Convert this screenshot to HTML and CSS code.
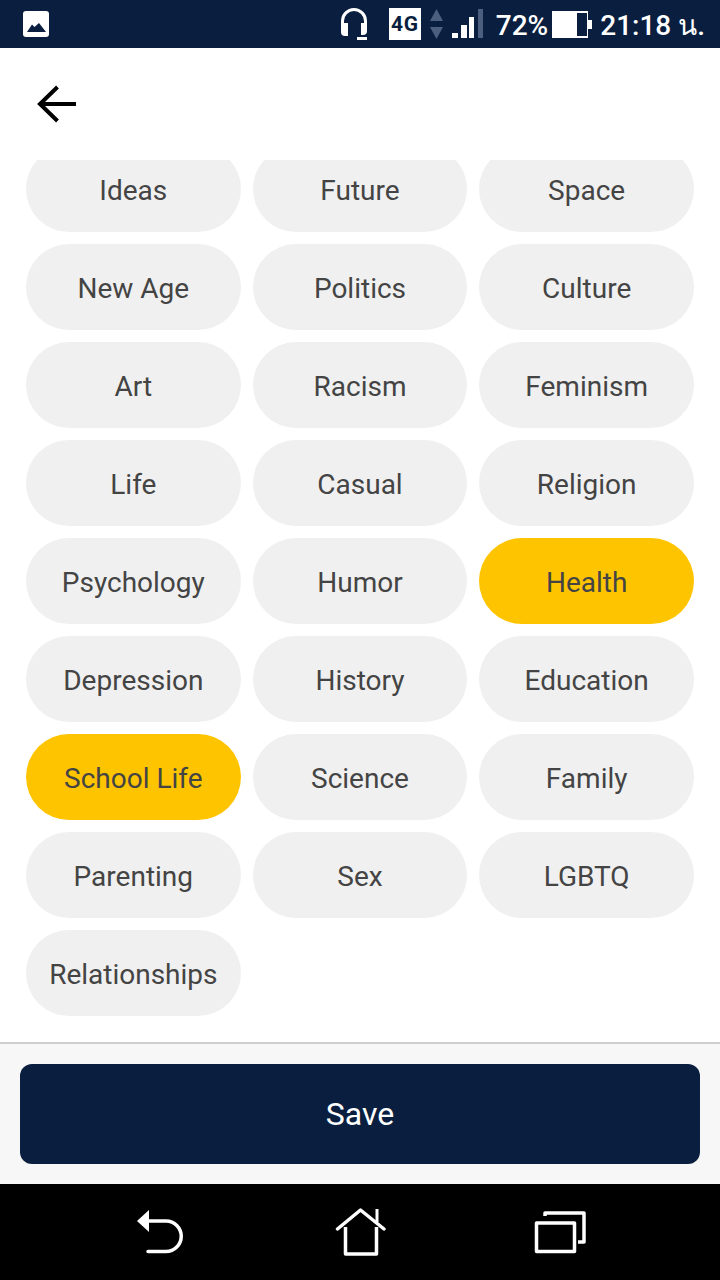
FILE: index.html
```html
<!DOCTYPE html>
<html lang="en">
<head>
  <meta charset="UTF-8">
  <title>Topics</title>
  <link rel="stylesheet" href="styles.css">
</head>
<body>

  <!-- Status bar -->
  <div class="status">
    <svg class="ic-image" width="26" height="26" viewBox="0 0 26 26">
      <rect width="26" height="26" rx="3" fill="#fff"/>
      <path d="M4 21 L9 13.500 L11.500 16 L16 12 L23 21 Z" fill="#0a1f3f"/>
    </svg>
    <div class="status-right">
      <svg class="ic-head" width="26" height="32" viewBox="0 0 26 32">
        <path d="M1.500 20 V13 A11.500 11.500 0 0 1 24.500 13 V20" fill="none" stroke="#fff" stroke-width="3"/>
        <path d="M0 18 Q0 15 3 15 H7 V28 H4 Q0 28 0 24 Z" fill="#fff"/>
        <path d="M26 18 Q26 15 23 15 H20 V27 H22 Q26 27 26 23 Z" fill="#fff"/>
        <rect x="16" y="29" width="10" height="3" fill="#fff"/>
      </svg>
      <div class="net">4G</div>
      <svg class="ic-arrows" width="13" height="30" viewBox="0 0 13 30">
        <path d="M6.500 0 L13 12 H0 Z" fill="#4d5f7e"/>
        <path d="M0 18 H13 L6.500 30 Z" fill="#4d5f7e"/>
      </svg>
      <svg class="ic-signal" width="32" height="30" viewBox="0 0 32 30">
        <rect x="1" y="24" width="6" height="5" fill="#fff"/>
        <rect x="10" y="16" width="6" height="13" fill="#fff"/>
        <rect x="18" y="8" width="5" height="21" fill="#fff"/>
        <rect x="27" y="0" width="5" height="29" fill="#4d5f7e"/>
      </svg>
      <span class="pct">72%</span>
      <svg class="ic-batt" width="40" height="27" viewBox="0 0 40 27">
        <rect width="36" height="27" fill="#fff"/>
        <rect x="25" y="2" width="10" height="23" fill="#0a1f3f"/>
        <rect x="36" y="9" width="4" height="9" fill="#fff"/>
      </svg>
      <span class="clock">21:18 น.</span>
    </div>
  </div>

  <!-- Header -->
  <div class="header">
    <svg width="41" height="38" viewBox="0 0 41 38">
      <path d="M40 19 H4 M21.500 2 L4 19 L21.500 36" fill="none" stroke="#000" stroke-width="4"/>
    </svg>
  </div>

  <!-- Topics -->
  <div class="list">
    <div class="grid">
      <div class="chip">Ideas</div>
      <div class="chip">Future</div>
      <div class="chip">Space</div>
      <div class="chip">New Age</div>
      <div class="chip">Politics</div>
      <div class="chip">Culture</div>
      <div class="chip">Art</div>
      <div class="chip">Racism</div>
      <div class="chip">Feminism</div>
      <div class="chip">Life</div>
      <div class="chip">Casual</div>
      <div class="chip">Religion</div>
      <div class="chip">Psychology</div>
      <div class="chip">Humor</div>
      <div class="chip active">Health</div>
      <div class="chip">Depression</div>
      <div class="chip">History</div>
      <div class="chip">Education</div>
      <div class="chip active">School Life</div>
      <div class="chip">Science</div>
      <div class="chip">Family</div>
      <div class="chip">Parenting</div>
      <div class="chip">Sex</div>
      <div class="chip">LGBTQ</div>
      <div class="chip">Relationships</div>
    </div>
  </div>

  <!-- Save -->
  <div class="footer">
    <button class="save">Save</button>
  </div>

  <!-- Navigation bar -->
  <div class="nav">
    <svg width="48" height="44" viewBox="0 0 48 44">
      <path d="M0 11 L12 0 V22 Z" fill="#fff"/>
      <path d="M10 11 H29 A15.250 15.250 0 0 1 29 41.500 H11" fill="none" stroke="#fff" stroke-width="3.500" stroke-linecap="round"/>
    </svg>
    <svg class="nav-home" width="52" height="48" viewBox="0 0 52 48">
      <path d="M2.500 21 L25.500 2 L49 21" fill="none" stroke="#fff" stroke-width="3.500" stroke-linecap="round" stroke-linejoin="round"/>
      <path d="M10.500 19 V46 H41.500 V19" fill="none" stroke="#fff" stroke-width="3.500" stroke-linejoin="round"/>
      <path d="M42 1 V14" fill="none" stroke="#fff" stroke-width="3"/>
    </svg>
    <svg width="52" height="44" viewBox="0 0 52 44">
      <rect x="2.500" y="13" width="38" height="28.500" fill="none" stroke="#fff" stroke-width="3.500" stroke-linejoin="round"/>
      <path d="M11 6 V3 H50 V32 H44" fill="none" stroke="#fff" stroke-width="3.500" stroke-linejoin="round"/>
    </svg>
  </div>

</body>
</html>
```
FILE: styles.css
```css
body {
  margin: 0;
  width: 720px;
  height: 1280px;
  display: flex;
  flex-direction: column;
  font-family: Roboto, sans-serif;
  background-color: #fff;
  overflow: hidden;
}

.status {
  height: 48px;
  flex: none;
  display: flex;
  align-items: center;
  justify-content: space-between;
  padding: 0 15px 0 23px;
  background-color: #0a1f3f;
  color: #fff;
}

.status-right {
  display: flex;
  align-items: center;
}

.ic-head {
  margin-right: 22px;
}

.net {
  width: 32px;
  height: 32px;
  margin-right: 9px;
  background-color: #fff;
  color: #0a1f3f;
  font-size: 21px;
  font-weight: 700;
  letter-spacing: 0.5px;
  line-height: 33px;
  text-align: center;
}

.ic-arrows {
  margin-right: 8px;
}

.ic-signal {
  margin-right: 13px;
}

.pct {
  margin-right: 4px;
  padding-top: 2px;
  font-size: 28px;
  font-weight: 500;
}

.ic-batt {
  margin-right: 8px;
}

.clock {
  padding-top: 2px;
  font-family: Roboto, "DejaVu Sans", sans-serif;
  font-size: 28px;
  font-weight: 500;
}

.header {
  height: 112px;
  flex: none;
  display: flex;
  align-items: center;
  padding-left: 36px;
  box-sizing: border-box;
}

.list {
  flex: 1;
  overflow: hidden;
}

.grid {
  display: grid;
  grid-template-columns: repeat(3, 1fr);
  grid-auto-rows: 86px;
  gap: 12px;
  margin-top: -14px;
  padding: 0 26px;
}

.chip {
  display: flex;
  align-items: center;
  justify-content: center;
  padding-top: 2px;
  box-sizing: border-box;
  background-color: #f0f0f0;
  border-radius: 43px;
  color: #444;
  font-size: 28px;
}

.chip.active {
  background-color: #ffc400;
}

.footer {
  flex: none;
  padding: 20px;
  background-color: #f7f7f7;
  border-top: 2px solid #cfcfcf;
}

.save {
  display: block;
  width: 100%;
  height: 100px;
  padding: 0;
  border: none;
  border-radius: 12px;
  background-color: #0a1f3f;
  color: #fff;
  font-family: Roboto, sans-serif;
  font-size: 32px;
}

.nav {
  height: 96px;
  flex: none;
  display: flex;
  align-items: center;
  padding-left: 137px;
  background-color: #000;
}

.nav-home {
  margin: 0 147px 0 150px;
}
```
